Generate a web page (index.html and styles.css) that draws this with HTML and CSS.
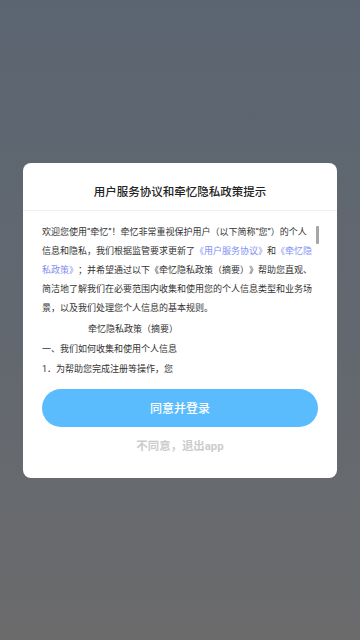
FILE: index.html
```html
<!DOCTYPE html>
<html lang="zh-CN">
<head>
<meta charset="utf-8">
<meta name="viewport" content="width=360, initial-scale=1">
<title>用户服务协议和牵忆隐私政策提示</title>
<link rel="stylesheet" href="styles.css">
</head>
<body>
<div class="screen">
  <div class="dialog">
    <div class="dialog-header">用户服务协议和牵忆隐私政策提示</div>
    <div class="dialog-body">
      <div class="scroll">
        <p class="para">欢迎您使用“牵忆”！牵忆非常重视保护用户（以下简称“您”）的个人信息和隐私，我们根据监管要求更新了<a class="link">《用户服务协议》</a>和<a class="link">《牵忆隐</a><a class="link">私政策》</a>；并希望通过以下《牵忆隐私政策（摘要）》帮助您直观、简洁地了解我们在必要范围内收集和使用您的个人信息类型和业务场景，以及我们处理您个人信息的基本规则。</p>
        <p class="para indent">牵忆隐私政策（摘要）</p>
        <p class="para">一、我们如何收集和使用个人信息</p>
        <p class="para">1．为帮助您完成注册等操作，您</p>
      </div>
      <div class="scrollbar"></div>
    </div>
    <div class="actions">
      <button class="btn-agree">同意并登录</button>
      <div class="btn-disagree">不同意，退出app</div>
    </div>
  </div>
</div>
</body>
</html>
```

FILE: styles.css
```css
* { box-sizing: border-box; }
html, body {
  margin: 0;
  padding: 0;
}
body {
  width: 360px;
  height: 640px;
  font-family: Roboto, "Noto Sans CJK SC", sans-serif;
  color: #333;
  text-spacing-trim: space-all;
}
.screen {
  width: 360px;
  height: 640px;
  background: linear-gradient(180deg, #5b6571 0%, #626870 50%, #6b6b6c 100%);
  display: flex;
  align-items: center;
  justify-content: center;
}
.dialog {
  width: 314px;
  height: 315px;
  background: #fff;
  border-radius: 8px;
  display: flex;
  flex-direction: column;
}
.dialog-header {
  padding: 21px 0 10px;
  line-height: 16px;
  font-size: 11.5px;
  font-weight: 500;
  color: #222;
  text-align: center;
  border-bottom: 1px solid #eeeeee;
}
.dialog-body {
  position: relative;
  padding: 12px 0 0 19px;
  height: 168px;
  overflow: hidden;
}
.scroll {
  width: 271px;
  height: 156px;
  overflow: hidden;
  text-spacing-trim: space-all;
}
.para {
  margin: 0 0 1px;
  font-size: 9px;
  line-height: 19px;
  color: #333;
}
.indent {
  padding-left: 46px;
  margin-top: 2px;
}
.link {
  color: #7f8ff3;
  text-decoration: none;
}
.scrollbar {
  position: absolute;
  left: 293px;
  top: 15px;
  width: 3px;
  height: 18px;
  background: #a6a6a6;
  border-radius: 1px;
}
.actions {
  display: flex;
  flex-direction: column;
  align-items: center;
  padding: 10px 19px 0;
}
.btn-agree {
  width: 276px;
  height: 38px;
  border: none;
  border-radius: 19px;
  background: #5bbcfd;
  color: #fff;
  font-family: Roboto, "Noto Sans CJK SC", sans-serif;
  font-size: 12px;
  font-weight: 500;
  padding: 0;
}
.btn-disagree {
  margin-top: 11px;
  font-size: 11.4px;
  line-height: 16px;
  font-weight: 700;
  color: #cccccc;
}
```
